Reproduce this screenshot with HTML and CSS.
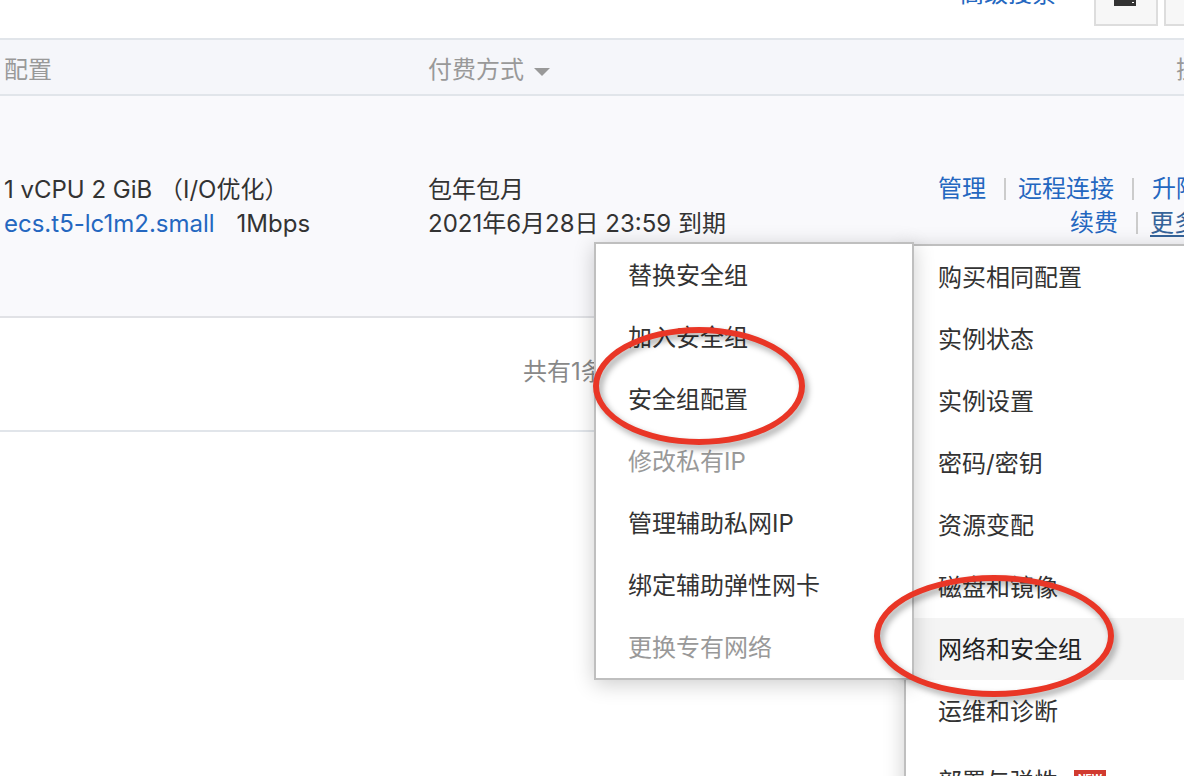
FILE: index.html
```
<!DOCTYPE html>
<html lang="zh-CN">
<head>
    <meta charset="UTF-8">
    <title>实例列表</title>
    <link rel="stylesheet" href="styles.css">
</head>
<body>
    <div class="page">
        <div class="toolbar">
            <a class="search-link" href="#">高级搜索</a>
            <button class="tool-btn" type="button" aria-label="导出">
                <svg width="24" height="24" viewBox="0 0 24 24">
                    <path d="M9 0h4v7h4l-6 7-6-7h4z" fill="#333"/>
                    <path d="M0 14h22v8H0z" fill="#333"/>
                    <path d="M18 18h2v1h-2z" fill="#fff"/>
                </svg>
            </button>
            <button class="tool-btn" type="button" aria-label="设置"></button>
        </div>

        <table class="instances">
            <thead>
                <tr>
                    <th class="col-config">配置</th>
                    <th class="col-pay">付费方式 <span class="caret"></span></th>
                    <th class="col-actions">操作</th>
                </tr>
            </thead>
            <tbody>
                <tr>
                    <td>
                        <div>1 vCPU 2 GiB （I/O优化）</div>
                        <div class="spec"><a href="#">ecs.t5-lc1m2.small</a><span>1Mbps</span></div>
                    </td>
                    <td>
                        <div>包年包月</div>
                        <div>2021年6月28日 23:59 到期</div>
                    </td>
                    <td class="col-actions">
                        <div class="actions">
                            <a href="#">管理</a><i class="sep"></i><a href="#">远程连接</a><i class="sep wide"></i><a href="#">升降配</a>
                        </div>
                        <div class="actions">
                            <a href="#">续费</a><i class="sep"></i><a class="more" href="#">更多<span class="caret"></span></a>
                            <div class="menu main-menu">
                                <button type="button">购买相同配置</button>
                                <button type="button">实例状态</button>
                                <button type="button">实例设置</button>
                                <button type="button">密码/密钥</button>
                                <button type="button">资源变配</button>
                                <button type="button">磁盘和镜像</button>
                                <button type="button" class="active">网络和安全组</button>
                                <button type="button">运维和诊断</button>
                                <button type="button" class="has-badge">部署与弹性<span class="badge">NEW</span></button>
                                <div class="menu sub-menu">
                                    <button type="button">替换安全组</button>
                                    <button type="button">加入安全组</button>
                                    <button type="button">安全组配置</button>
                                    <button type="button" disabled>修改私有IP</button>
                                    <button type="button">管理辅助私网IP</button>
                                    <button type="button">绑定辅助弹性网卡</button>
                                    <button type="button" disabled>更换专有网络</button>
                                    <div class="mark mark-config"></div>
                                </div>
                                <div class="mark mark-network"></div>
                            </div>
                        </div>
                    </td>
                </tr>
            </tbody>
        </table>

        <div class="pagination">共有1条</div>
    </div>
</body>
</html>
```
FILE: styles.css
```
* {
    box-sizing: border-box;
}

body {
    margin: 0;
    height: 100vh;
    overflow: hidden;
    background: #fff;
    color: #333;
    font-family: Inter, "Noto Sans CJK SC", sans-serif;
    font-size: 24px;
    line-height: 34px;
}

a {
    color: #2467c0;
    text-decoration: none;
}

button {
    font: inherit;
    color: inherit;
}

/* the list is scrolled a little, its top and right side run out of view */
.page {
    width: calc(100% + 44px);
    margin-top: -38px;
}

.toolbar {
    display: flex;
    justify-content: flex-end;
    align-items: center;
    gap: 6px;
    padding-bottom: 12px;
}

.search-link {
    margin-right: 32px;
}

.tool-btn {
    display: flex;
    justify-content: center;
    align-items: flex-end;
    width: 64px;
    height: 64px;
    padding: 0 0 16px;
    background: #f7f7f7;
    border: 2px solid #ddd;
}

.instances {
    width: 100%;
    border-collapse: separate;
    border-spacing: 0;
    table-layout: fixed;
}

.instances th {
    height: 58px;
    padding: 6px 4px 0;
    background: #f5f6fa;
    border-top: 2px solid #e1e5ea;
    border-bottom: 2px solid #e1e5ea;
    color: #999;
    font-weight: normal;
    text-align: left;
}

.instances td {
    height: 222px;
    padding: 2px 4px 0;
    background: #f9f9fc;
    border-bottom: 2px solid #e1e2e6;
    white-space: nowrap;
}

.col-config {
    width: 424px;
}

.instances .col-actions {
    text-align: right;
}

.instances td.col-actions {
    padding-top: 0;
}

.caret {
    display: inline-block;
    margin-left: 3px;
    border: 8px solid transparent;
    border-top-color: currentColor;
    border-bottom: 0;
    vertical-align: 2px;
}

.spec {
    display: flex;
    gap: 22px;
}

.actions {
    position: relative;
    display: flex;
    justify-content: flex-end;
    align-items: center;
}

.sep {
    width: 2px;
    height: 22px;
    margin: 0 12px 0 18px;
    background: #ccc;
}

.sep.wide {
    margin-right: 18px;
}

.more {
    color: #356399;
    text-decoration: underline;
    text-underline-offset: 4px;
}

.more .caret {
    margin-left: 10px;
}

.menu {
    position: absolute;
    width: 320px;
    background: #fff;
    border: 2px solid #bfbfbf;
    box-shadow: 0 4px 20px rgba(0, 0, 0, 0.2);
}

.main-menu {
    top: calc(100% + 4px);
    right: 0;
}

.sub-menu {
    top: -4px;
    right: calc(100% - 8px);
}

.menu button {
    display: flex;
    align-items: center;
    width: 100%;
    height: 62px;
    padding: 2px 32px 0;
    background: none;
    border: 0;
    text-align: left;
}

.menu button.active {
    background: #f4f4f4;
    color: #222;
}

.menu button:disabled {
    color: #999;
}

.menu button.has-badge {
    height: 78px;
}

.badge {
    margin: 0 0 8px 16px;
    padding: 0 4px;
    background: #d13b30;
    color: #fff;
    font-size: 10px;
    font-weight: bold;
    line-height: 16px;
}

/* hand drawn red circles */
.mark {
    position: absolute;
    border: 6px solid #e93626;
    border-radius: 50%;
    filter: drop-shadow(3px 4px 3px rgba(0, 0, 0, 0.35));
    pointer-events: none;
}

.mark-config {
    top: 83px;
    left: -3px;
    width: 212px;
    height: 118px;
}

.mark-network {
    top: 329px;
    left: -32px;
    width: 240px;
    height: 122px;
}

.pagination {
    height: 114px;
    padding: 37px 0 0 523px;
    border-bottom: 2px solid #e1e5ea;
    color: #888;
}
```
